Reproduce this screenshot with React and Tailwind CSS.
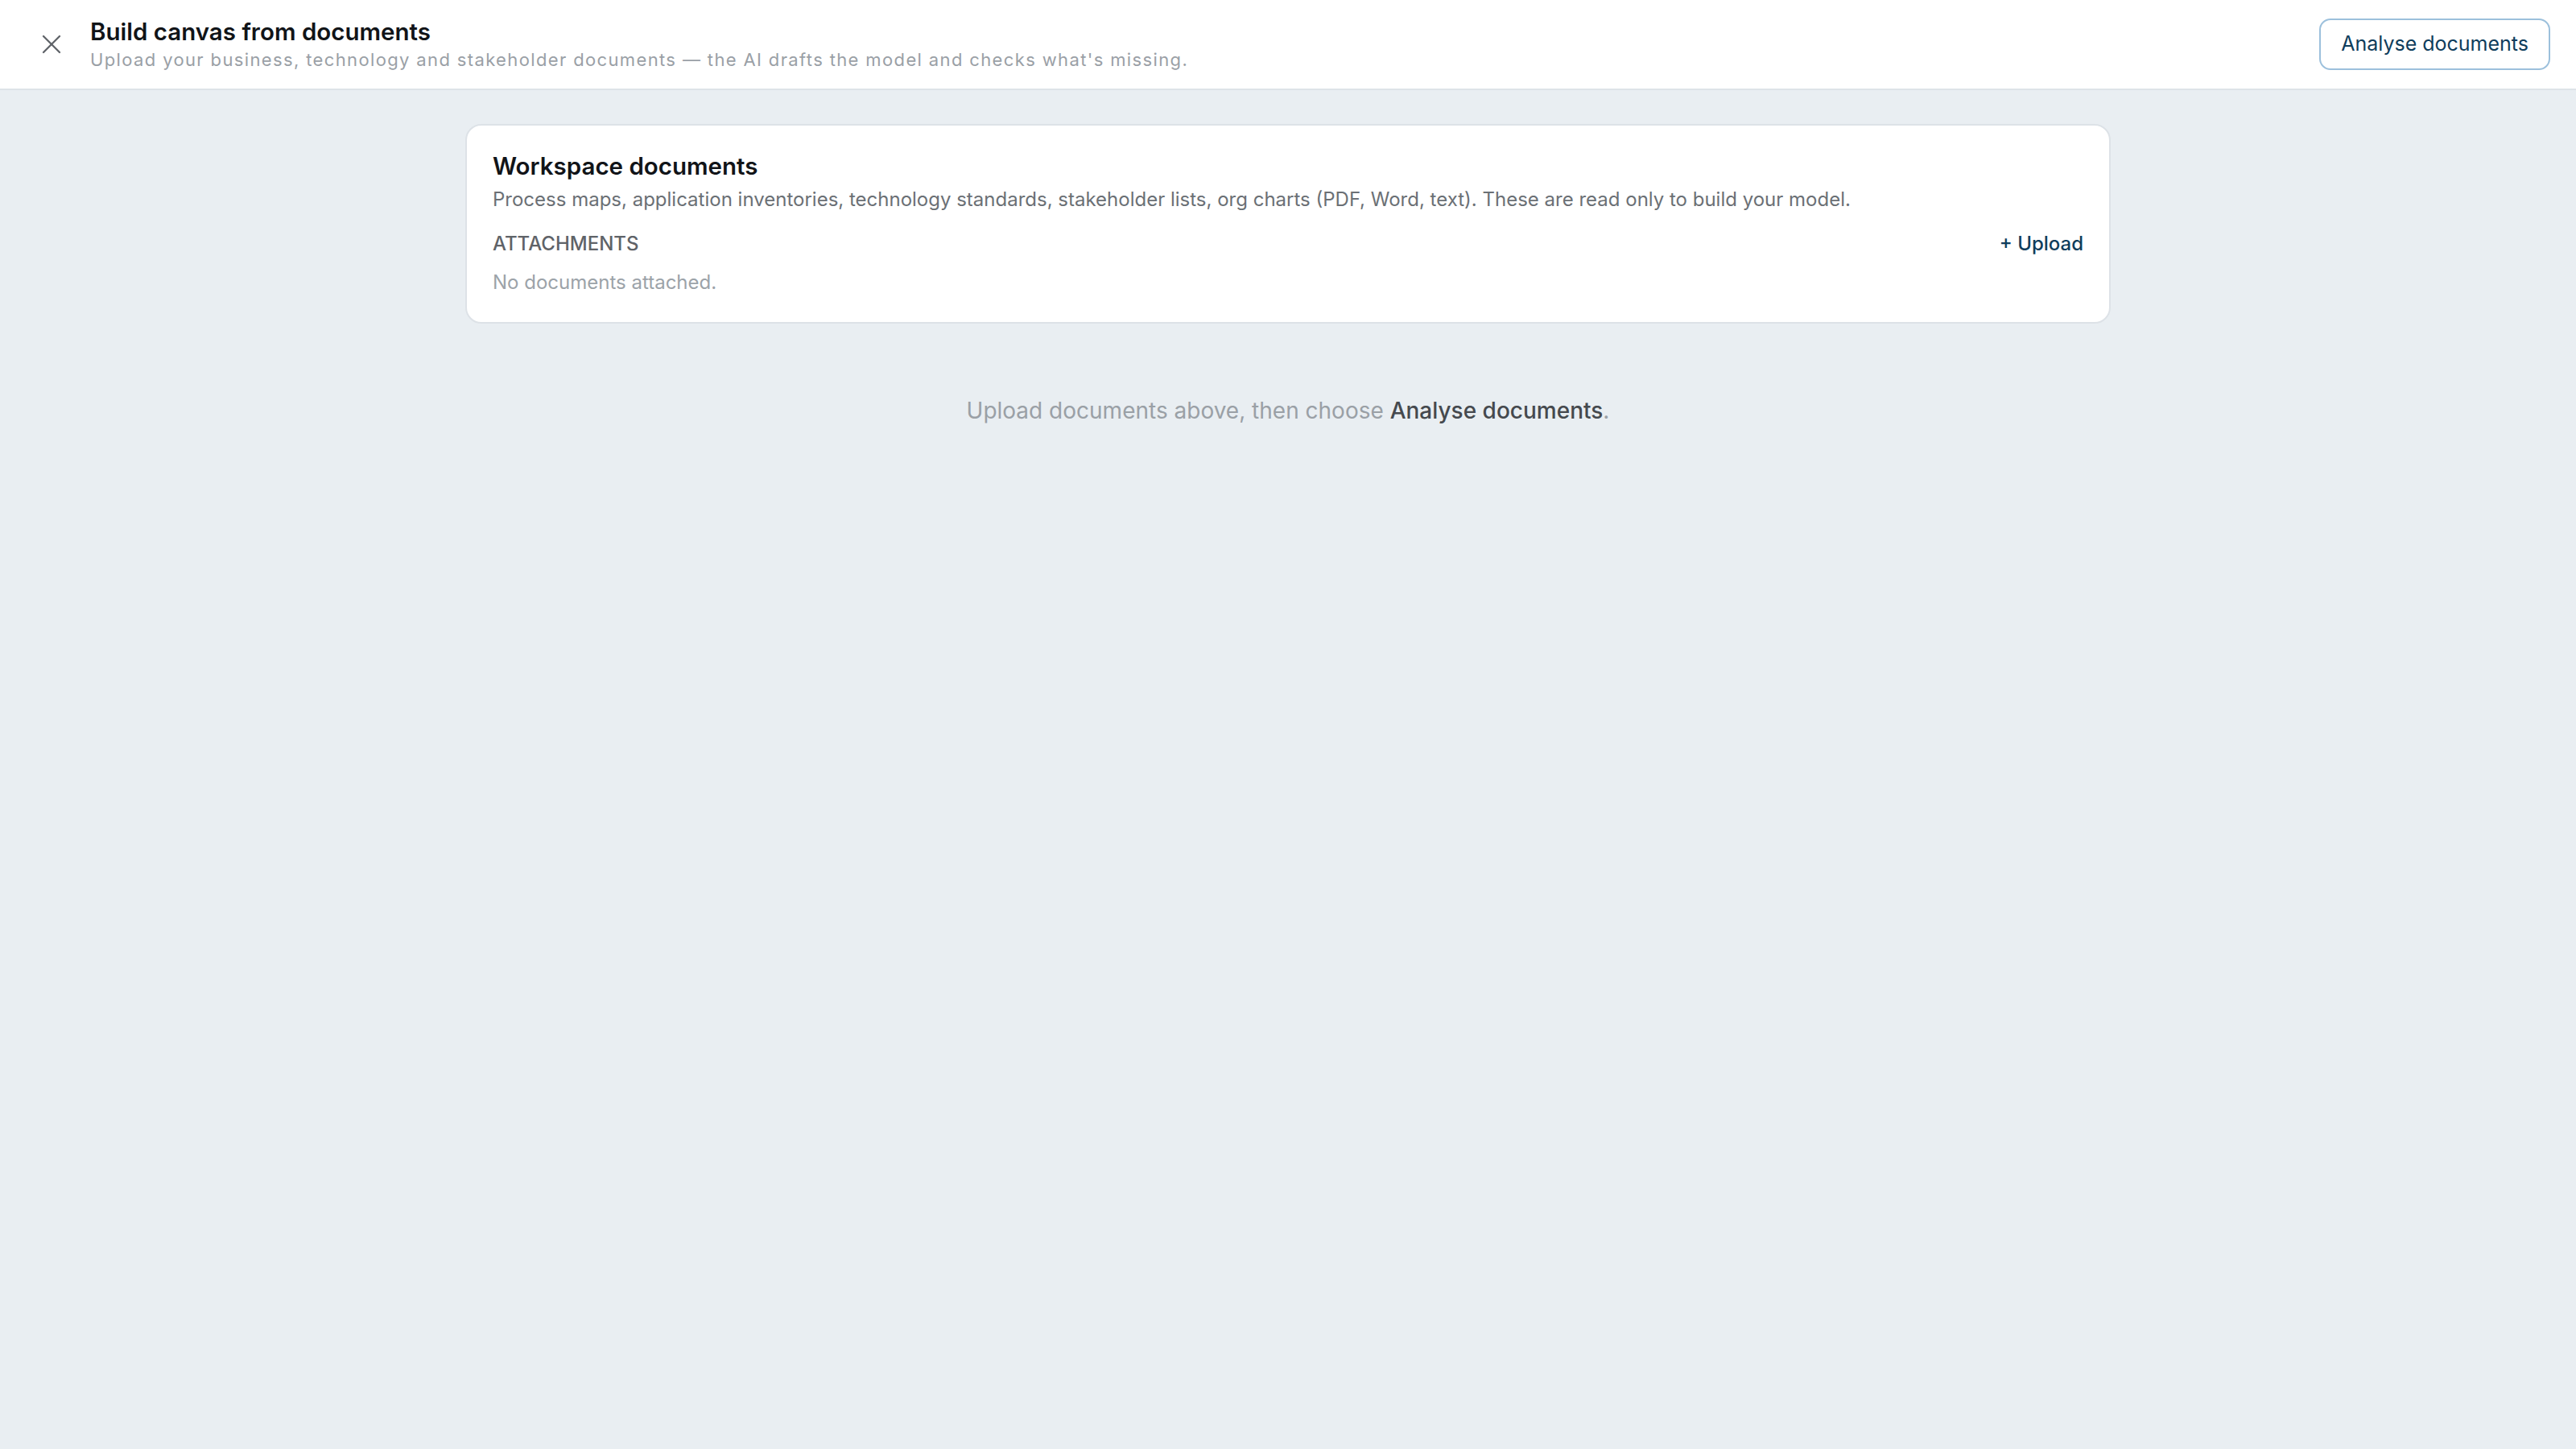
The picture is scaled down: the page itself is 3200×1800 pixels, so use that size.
import { X } from "lucide-react";

const font = { fontFamily: "Inter, 'Noto Sans', sans-serif" };

export default function App() {
  return (
    <div style={font} className="min-h-screen w-full bg-[#e9eef2] flex flex-col">
      {/* Header */}
      <header className="h-[112px] bg-white border-b-2 border-[#dde3e8] flex items-center justify-between pl-[44px] pr-[32px]">
        <div className="flex items-center gap-[28px]">
          <button className="text-[#5f6368]">
            <X size={40} strokeWidth={1.4} />
          </button>
          <div className="flex flex-col">
            <h1 className="text-[29.5px] leading-[36px] font-semibold text-[#111418]">
              Build canvas from documents
            </h1>
            <p className="mt-[1px] text-[22px] leading-[32px] tracking-[0.062em] text-[#9aa0a6]">
              Upload your business, technology and stakeholder documents — the AI drafts the model and checks what's missing.
            </p>
          </div>
        </div>
        <button className="h-[64px] px-[25px] rounded-[14px] border-2 border-[#9cc0dc] bg-white text-[25px] text-[#0f3d5c]">
          Analyse documents
        </button>
      </header>

      {/* Body */}
      <main className="flex flex-col items-center pt-[42px]">
        <section className="w-[2044px] bg-white rounded-[20px] border-2 border-[#dde2e7] px-[32px] pt-[30px] pb-[32px]">
          <h2 className="text-[29.5px] leading-[40px] font-semibold text-[#111418]">Workspace documents</h2>
          <p className="mt-[4px] text-[24px] leading-[36px] text-[#6b7075]">
            Process maps, application inventories, technology standards, stakeholder lists, org charts (PDF, Word, text). These are read only to build your model.
          </p>
          <div className="flex items-center justify-between mt-[20px]">
            <span className="text-[24px] leading-[34px] font-medium uppercase text-[#5f6368]">Attachments</span>
            <button className="text-[24px] leading-[34px] font-medium text-[#0f3d5c]">+ Upload</button>
          </div>
          <p className="mt-[14px] text-[24px] leading-[34px] text-[#9ca3a9]">No documents attached.</p>
        </section>

        <p className="mt-[88px] text-[28px] leading-[40px] text-[#9aa0a6]">
          Upload documents above, then choose{" "}
          <span className="font-medium text-[#45494e]">Analyse documents</span>.
        </p>
      </main>
    </div>
  );
}
